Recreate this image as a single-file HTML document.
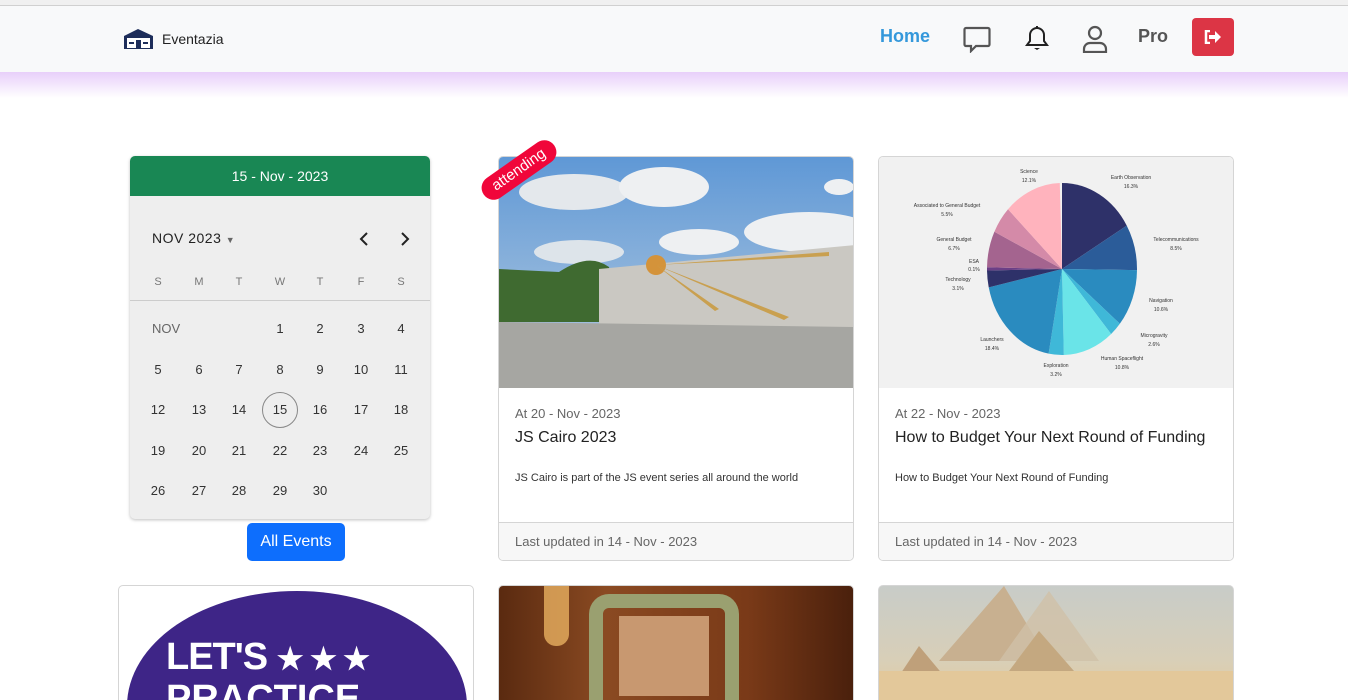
<!DOCTYPE html>
<html><head><meta charset="utf-8"><style>
*{margin:0;padding:0;box-sizing:border-box}
html,body{width:1348px;height:700px;overflow:hidden}
body{background:#fff;font-family:"Liberation Sans",sans-serif;position:relative;color:#212529}
.a{position:absolute}
.nav{left:0;top:0;width:1348px;height:72px;background:#f8f9fa;border-top:5px solid #f0f0f0}
.nav:before{content:"";position:absolute;left:0;top:0;width:1348px;height:1px;background:#d0d0d0}
.glow{left:0;top:72px;width:1348px;height:26px;background:linear-gradient(#e8cffa,#fff)}
.cal{left:130px;top:156px;width:300px;height:363px;background:#eee;border-radius:5px;box-shadow:0 1px 3px rgba(0,0,0,.25);overflow:hidden}
.calh{left:0;top:0;width:300px;height:40px;background:#198754;color:#fff;font-size:14px;text-align:center;line-height:40px}
.d{position:absolute;width:40px;text-align:center;font-size:13px;color:#333}
.card{background:#fff;border:1px solid #d5d5d5;border-radius:5px;overflow:hidden}
.ft{position:absolute;left:0;bottom:0;width:100%;height:38px;background:#f7f7f7;border-top:1px solid #d5d5d5;font-size:13px;color:#666;padding:11px 16px}
.dt{position:absolute;left:16px;top:249px;font-size:13px;color:#666}
.tt{position:absolute;left:16px;top:272px;font-size:16px;color:#222}
.ds{position:absolute;left:16px;top:315px;font-size:11px;color:#333}
</style></head><body>
<div class="a nav">
 <svg class="a" style="left:122px;top:23px" width="33" height="22" viewBox="0 0 33 22"><path d="M2 8 L16 1 L31 8 L31 21 L2 21Z" fill="#1d2d5a"/><rect x="5" y="10" width="23" height="10" fill="#fff"/><rect x="14" y="12" width="5" height="8" fill="#1d2d5a"/><rect x="7" y="14" width="5" height="2" fill="#1d2d5a"/><rect x="21" y="14" width="5" height="2" fill="#1d2d5a"/></svg>
 <div class="a" style="left:162px;top:26px;font-size:14px;color:#222">Eventazia</div>
 <div class="a" style="left:880px;top:21px;font-size:18px;font-weight:bold;color:#3498db">Home</div>
 <svg class="a" style="left:963px;top:21px" width="28" height="27" viewBox="0 0 28 27"><path d="M3 2h22a1.5 1.5 0 0 1 1.5 1.5v15a1.5 1.5 0 0 1-1.5 1.5H13l-5 5v-5H3a1.5 1.5 0 0 1-1.5-1.5v-15A1.5 1.5 0 0 1 3 2z" fill="none" stroke="#555" stroke-width="2.2"/></svg>
 <svg class="a" style="left:1024px;top:20px" width="26" height="26" viewBox="0 0 26 26"><path d="M13 3a7 7 0 0 0-7 7v6l-3 4h20l-3-4v-6a7 7 0 0 0-7-7z" fill="none" stroke="#222" stroke-width="2"/><path d="M10 23h6l-3 2z" fill="#222"/><rect x="12" y="1" width="2" height="3" fill="#222"/></svg>
 <svg class="a" style="left:1082px;top:20px" width="26" height="28" viewBox="0 0 26 28"><circle cx="13" cy="8" r="6" fill="none" stroke="#555" stroke-width="2.2"/><path d="M2 27v-3a6 6 0 0 1 6-6h10a6 6 0 0 1 6 6v3z" fill="none" stroke="#555" stroke-width="2.2"/></svg>
 <div class="a" style="left:1138px;top:21px;font-size:18px;font-weight:bold;color:#555">Pro</div>
 <div class="a" style="left:1192px;top:13px;width:42px;height:38px;background:#dc3545;border-radius:4px"><svg class="a" style="left:12px;top:12px" width="18" height="14" viewBox="0 0 18 14"><path d="M6 1H2v12h4" fill="none" stroke="#fff" stroke-width="2.5"/><path d="M5 5h6V1l6 6-6 6V9H5z" fill="#fff"/></svg></div>
</div>
<div class="a glow"></div>

<div class="a cal">
 <div class="a calh">15 - Nov - 2023</div>
 <div class="a" style="left:22px;top:74px;font-size:14px;letter-spacing:.5px;color:#222">NOV 2023 <span style="font-size:9px;color:#666">&#9660;</span></div>
 <svg class="a" style="left:229px;top:76px" width="10" height="14"><path d="M8 1L2 7l6 6" fill="none" stroke="#222" stroke-width="2"/></svg>
 <svg class="a" style="left:270px;top:76px" width="10" height="14"><path d="M2 1l6 6-6 6" fill="none" stroke="#222" stroke-width="2"/></svg>
 <div class="a" style="left:0;top:144px;width:300px;height:1px;background:#ccc"></div>
 <div id="g"></div>
 <div class="a" style="left:132px;top:236px;width:36px;height:36px;border:1px solid #888;border-radius:50%"></div>
</div>
<div class="a" style="left:247px;top:523px;width:98px;height:38px;background:#0d6efd;border-radius:5px;color:#fff;font-size:16px;text-align:center;line-height:38px">All Events</div>

<div class="a card" style="left:498px;top:156px;width:356px;height:405px">
 <svg class="a" style="left:0;top:0" width="356" height="231" viewBox="0 0 356 231">
  <defs><linearGradient id="sk" x1="0" y1="0" x2="0" y2="1"><stop offset="0" stop-color="#5f98d6"/><stop offset="1" stop-color="#b8cde0"/></linearGradient></defs>
  <rect width="356" height="231" fill="url(#sk)"/>
  <ellipse cx="75" cy="35" rx="55" ry="18" fill="#e4e8ec"/><ellipse cx="165" cy="30" rx="45" ry="20" fill="#eef0f2"/><ellipse cx="200" cy="85" rx="40" ry="13" fill="#eef0f2"/><ellipse cx="310" cy="75" rx="65" ry="20" fill="#eef0f2"/><ellipse cx="80" cy="95" rx="45" ry="12" fill="#dde4ea"/><ellipse cx="340" cy="30" rx="15" ry="8" fill="#eef0f2"/>
  <path d="M0 112 L60 115 Q90 95 110 110 L120 165 L0 165Z" fill="#3f6a30"/>
  <path d="M100 112 L356 88 L356 172 L100 168Z" fill="#cac8c2"/>
  <circle cx="157" cy="108" r="10" fill="#d4933a"/>
  <path d="M157 108 L330 95 L330 99Z M157 108 L290 160 L285 163Z M157 108 L220 152 L216 154Z" fill="#c9a050"/>
  <path d="M0 165 L356 170 L356 231 L0 231Z" fill="#a6a6a2"/>
 </svg>
 <div class="dt">At 20 - Nov - 2023</div><div class="tt">JS Cairo 2023</div>
 <div class="ds">JS Cairo is part of the JS event series all around the world</div>
 <div class="ft">Last updated in 14 - Nov - 2023</div>
</div>
<div class="a" style="left:476px;top:158px;width:86px;height:24px;background:#f0063a;border-radius:12px;color:#fff;font-size:15px;text-align:center;line-height:24px;transform:rotate(-35deg);transform-origin:center">attending</div>

<div class="a card" style="left:878px;top:156px;width:356px;height:405px">
 <div class="a" style="left:0;top:0;width:356px;height:231px;background:#f1f1f1"></div>
 <svg class="a" style="left:0;top:0" width="356" height="231" viewBox="0 0 356 231">
  <g transform="translate(183,112) scale(1.5,1.72) rotate(-90)">
   <g fill="none" stroke-width="50">
   <circle r="25" pathLength="979" stroke="#2e3169" stroke-dasharray="163 979" stroke-dashoffset="0"/>
   <circle r="25" pathLength="979" stroke="#2b5c99" stroke-dasharray="85 979" stroke-dashoffset="-163"/>
   <circle r="25" pathLength="979" stroke="#2a8bbf" stroke-dasharray="106 979" stroke-dashoffset="-248"/>
   <circle r="25" pathLength="979" stroke="#3fb8d8" stroke-dasharray="26 979" stroke-dashoffset="-354"/>
   <circle r="25" pathLength="979" stroke="#6ae4e8" stroke-dasharray="108 979" stroke-dashoffset="-380"/>
   <circle r="25" pathLength="979" stroke="#3fb8d8" stroke-dasharray="32 979" stroke-dashoffset="-488"/>
   <circle r="25" pathLength="979" stroke="#2a8bbf" stroke-dasharray="184 979" stroke-dashoffset="-520"/>
   <circle r="25" pathLength="979" stroke="#2e3169" stroke-dasharray="31 979" stroke-dashoffset="-704"/>
   <circle r="25" pathLength="979" stroke="#6b3f86" stroke-dasharray="6 979" stroke-dashoffset="-735"/>
   <circle r="25" pathLength="979" stroke="#a4648f" stroke-dasharray="67 979" stroke-dashoffset="-741"/>
   <circle r="25" pathLength="979" stroke="#d48aa8" stroke-dasharray="50 979" stroke-dashoffset="-808"/>
   <circle r="25" pathLength="979" stroke="#ffb3bd" stroke-dasharray="121 979" stroke-dashoffset="-858"/>
   </g>
  </g>
  <g font-size="5" fill="#333" text-anchor="middle" font-family="Liberation Sans">
   <text x="150" y="16">Science</text><text x="150" y="25">12.1%</text>
   <text x="252" y="22">Earth Observation</text><text x="252" y="31">16.3%</text>
   <text x="68" y="50">Associated to General Budget</text><text x="68" y="59">5.5%</text>
   <text x="75" y="84">General Budget</text><text x="75" y="93">6.7%</text>
   <text x="95" y="106">ESA</text><text x="95" y="114">0.1%</text>
   <text x="79" y="124">Technology</text><text x="79" y="133">3.1%</text>
   <text x="297" y="84">Telecommunications</text><text x="297" y="93">8.5%</text>
   <text x="282" y="145">Navigation</text><text x="282" y="154">10.6%</text>
   <text x="275" y="180">Microgravity</text><text x="275" y="189">2.6%</text>
   <text x="113" y="184">Launchers</text><text x="113" y="193">18.4%</text>
   <text x="243" y="203">Human Spaceflight</text><text x="243" y="212">10.8%</text>
   <text x="177" y="210">Exploration</text><text x="177" y="219">3.2%</text>
  </g>
 </svg>
 <div class="dt">At 22 - Nov - 2023</div><div class="tt">How to Budget Your Next Round of Funding</div>
 <div class="ds">How to Budget Your Next Round of Funding</div>
 <div class="ft">Last updated in 14 - Nov - 2023</div>
</div>

<div class="a card" style="left:118px;top:585px;width:356px;height:125px">
 <div class="a" style="left:8px;top:5px;width:340px;height:230px;border-radius:50%;background:#3e2587"></div>
 <div class="a" style="left:47px;top:50px;font-size:38px;font-weight:bold;color:#fff;letter-spacing:-1px">LET'S <span style="font-size:30px">&#9733; &#9733; &#9733;</span></div>
 <div class="a" style="left:47px;top:92px;font-size:38px;font-weight:bold;color:#fff">PRACTICE</div>
</div>
<div class="a card" style="left:498px;top:585px;width:356px;height:125px;background:linear-gradient(90deg,#5a2a10,#8a4a22 30%,#7a3a18 70%,#4a200c)">
 <div class="a" style="left:45px;top:0;width:25px;height:60px;background:#e8b060;border-radius:0 0 12px 12px;opacity:.8"></div>
 <div class="a" style="left:90px;top:8px;width:150px;height:110px;border:14px solid #9aa070;border-bottom:none;border-radius:20px 20px 0 0"></div>
 <div class="a" style="left:120px;top:30px;width:90px;height:80px;background:#c89870"></div>
</div>
<div class="a card" style="left:878px;top:585px;width:356px;height:125px;background:linear-gradient(#c8ccc8,#d8cfb8 60%,#e6cc98)">
 <svg class="a" style="left:0;top:0" width="356" height="115"><path d="M60 75 L125 0 L170 75Z" fill="#c8b090"/><path d="M120 75 L170 5 L220 75Z" fill="#cfc0a8" opacity=".8"/><path d="M130 85 L160 45 L195 85Z" fill="#c4a880"/><path d="M20 90 L40 60 L65 90Z" fill="#bfa07a"/><rect y="85" width="356" height="30" fill="#e3c89a"/></svg>
</div>

<script>
var g=document.getElementById('g'),h='';
var cx=[8,49,89,130,170,211,251];
'SMTWTFS'.split('').forEach(function(c,i){h+='<div class="d" style="left:'+(cx[i]+0)+'px;top:120px;font-size:11px;color:#777">'+c+'</div>'});
h+='<div class="d" style="left:22px;top:165px;width:auto;color:#666">NOV</div>';
var day=1,rows=[165,206,246,287,327];
for(var r=0;r<5;r++)for(var c=0;c<7;c++){if(r==0&&c<3)continue;if(day>30)break;h+='<div class="d" style="left:'+cx[c]+'px;top:'+rows[r]+'px">'+day+'</div>';day++;}
g.innerHTML=h;
</script>
</body></html>
